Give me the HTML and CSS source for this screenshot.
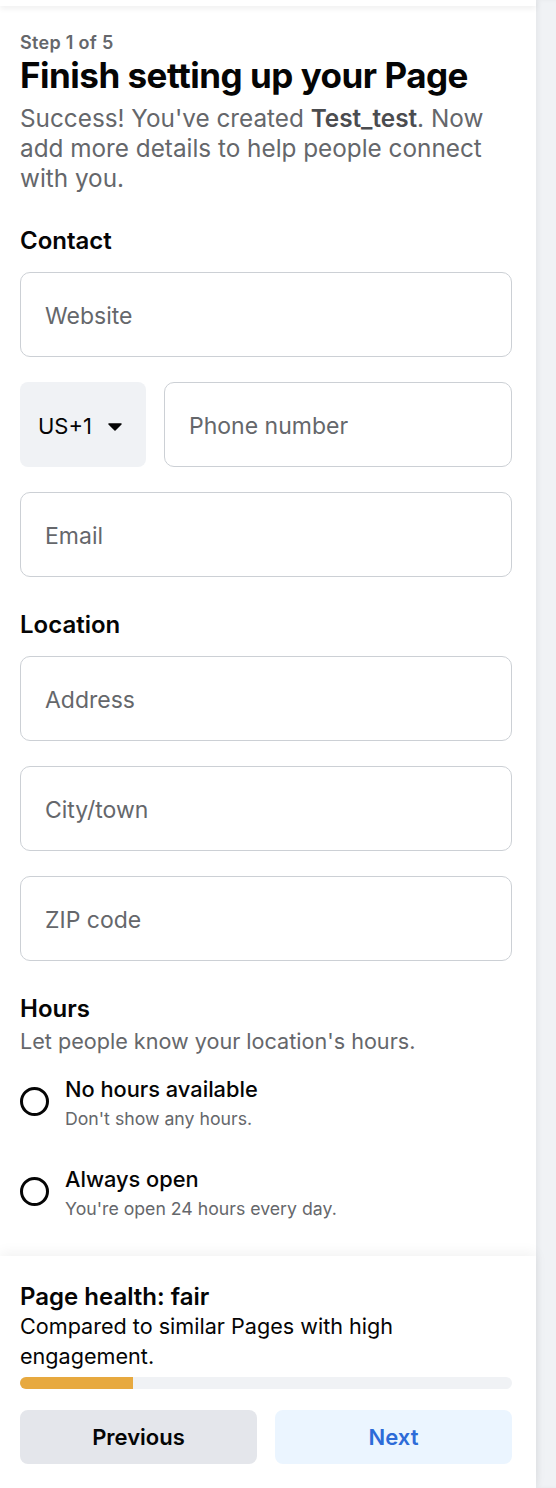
FILE: index.html
```html
<!DOCTYPE html>
<html>
<head>
    <title>Finish setting up your Page</title>
    <link rel="stylesheet" href="styles.css">
</head>
<body>
    <div class="panel">
        <div class="topbar"></div>
        <div class="content">
            <div class="step">Step 1 of 5</div>
            <h1>Finish setting up your Page</h1>
            <p class="intro">Success! You've created <b>Test_test</b>. Now add more details to help people connect with you.</p>

            <h2>Contact</h2>
            <div class="field"><input type="text" placeholder="Website"></div>
            <div class="field phone-row">
                <div class="country">
                    <span>US+1</span>
                    <svg width="14" height="8" viewBox="0 0 14 8"><path d="M1 1h12l-6 6z" fill="#050505" stroke="#050505" stroke-linejoin="round" stroke-width="1.5"/></svg>
                </div>
                <input type="text" placeholder="Phone number">
            </div>
            <div class="field"><input type="text" placeholder="Email"></div>

            <h2>Location</h2>
            <div class="field"><input type="text" placeholder="Address"></div>
            <div class="field"><input type="text" placeholder="City/town"></div>
            <div class="field"><input type="text" placeholder="ZIP code"></div>

            <h2>Hours</h2>
            <p class="hint">Let people know your location's hours.</p>
            <label class="radio">
                <span class="circle"></span>
                <span class="radio-text">
                    <span class="radio-title">No hours available</span>
                    <span class="radio-sub">Don't show any hours.</span>
                </span>
            </label>
            <label class="radio">
                <span class="circle"></span>
                <span class="radio-text">
                    <span class="radio-title">Always open</span>
                    <span class="radio-sub">You're open 24 hours every day.</span>
                </span>
            </label>
        </div>
        <div class="footer">
            <div class="health-title">Page health: fair</div>
            <p class="health-desc">Compared to similar Pages with high engagement.</p>
            <div class="progress"><div class="progress-fill" style="width: 23%"></div></div>
            <div class="buttons">
                <button class="btn btn-prev">Previous</button>
                <button class="btn btn-next">Next</button>
            </div>
        </div>
    </div>
    <div class="side"></div>
</body>
</html>
```

FILE: styles.css
```css
body {
    margin: 0;
    padding: 0;
    display: flex;
    min-height: 1488px;
    font-family: Inter, "Noto Sans", sans-serif;
    color: #050505;
    background-color: #fff;
}
.panel {
    width: 536px;
    display: flex;
    flex-direction: column;
    background-color: #fff;
}
.side {
    flex: 1;
    background-color: #f0f2f5;
    box-shadow: inset 3px 0 4px rgba(0, 0, 0, 0.04);
}
.topbar {
    height: 6px;
    background-color: #fff;
    box-shadow: 0 2px 6px rgba(0, 0, 0, 0.08);
    position: relative;
    z-index: 1;
}
.content {
    padding: 27px 24px 31px 20px;
}
.step {
    font-size: 18px;
    line-height: 20px;
    font-weight: 600;
    letter-spacing: 0.3px;
    color: #65676b;
}
h1 {
    margin: 3px 0 0;
    font-size: 35px;
    line-height: 38px;
    font-weight: 700;
    letter-spacing: -0.5px;
}
.intro {
    margin: 9px 0 0;
    font-size: 24.3px;
    line-height: 30px;
    color: #65676b;
}
.intro b {
    font-weight: 600;
    color: #4b4c4f;
}
h2 {
    margin: 34px 0 0;
    font-size: 24px;
    line-height: 28px;
    font-weight: 600;
}
.field {
    margin-top: 25px;
}
h2 + .field {
    margin-top: 17px;
}
.field input {
    display: block;
    width: 100%;
    height: 85px;
    box-sizing: border-box;
    border: 1px solid #ccd0d5;
    border-radius: 10px;
    padding: 2px 24px 0;
    font-family: inherit;
    font-size: 23px;
    color: #050505;
    background: #fff;
}
.field input::placeholder {
    color: #65676b;
}
.phone-row {
    display: flex;
    gap: 18px;
}
.phone-row input {
    flex: 1;
    width: auto;
    min-width: 0;
}
.country {
    width: 126px;
    height: 85px;
    flex-shrink: 0;
    box-sizing: border-box;
    background-color: #f0f2f5;
    border-radius: 8px;
    display: flex;
    align-items: center;
    padding: 2px 0 0 18px;
    gap: 16px;
    font-size: 22px;
}
.country svg {
    margin-top: 2px;
}
.hint {
    margin: 4px 0 0;
    font-size: 21.6px;
    line-height: 28px;
    color: #65676b;
}
.radio {
    display: flex;
    gap: 16px;
    margin-top: 30px;
}
.hint + .radio {
    margin-top: 20px;
}
.circle {
    width: 29px;
    height: 29px;
    box-sizing: border-box;
    border: 3px solid #050505;
    border-radius: 50%;
    margin-top: 12px;
    flex-shrink: 0;
}
.radio-text {
    display: flex;
    flex-direction: column;
}
.radio-title {
    font-size: 21.8px;
    line-height: 28px;
    font-weight: 500;
}
.radio-sub {
    font-size: 17.7px;
    line-height: 32px;
    color: #65676b;
}
.footer {
    padding: 27px 24px 24px 20px;
    box-shadow: 0 -4px 12px rgba(0, 0, 0, 0.05);
    position: relative;
}
.health-title {
    font-size: 24px;
    line-height: 28px;
    font-weight: 600;
}
.health-desc {
    margin: 0;
    font-size: 21.6px;
    line-height: 30px;
}
.progress {
    margin-top: 6px;
    height: 12px;
    border-radius: 6px;
    background-color: #f0f2f5;
    overflow: hidden;
}
.progress-fill {
    height: 100%;
    background-color: #e7a93f;
}
.buttons {
    display: flex;
    gap: 18px;
    margin-top: 21px;
}
.btn {
    flex: 1;
    height: 54px;
    border: none;
    border-radius: 8px;
    font-family: inherit;
    font-size: 22px;
    font-weight: 600;
    cursor: pointer;
}
.btn-prev {
    background-color: #e4e6eb;
    color: #050505;
}
.btn-next {
    background-color: #ebf5ff;
    color: #2d6bd8;
}
```
